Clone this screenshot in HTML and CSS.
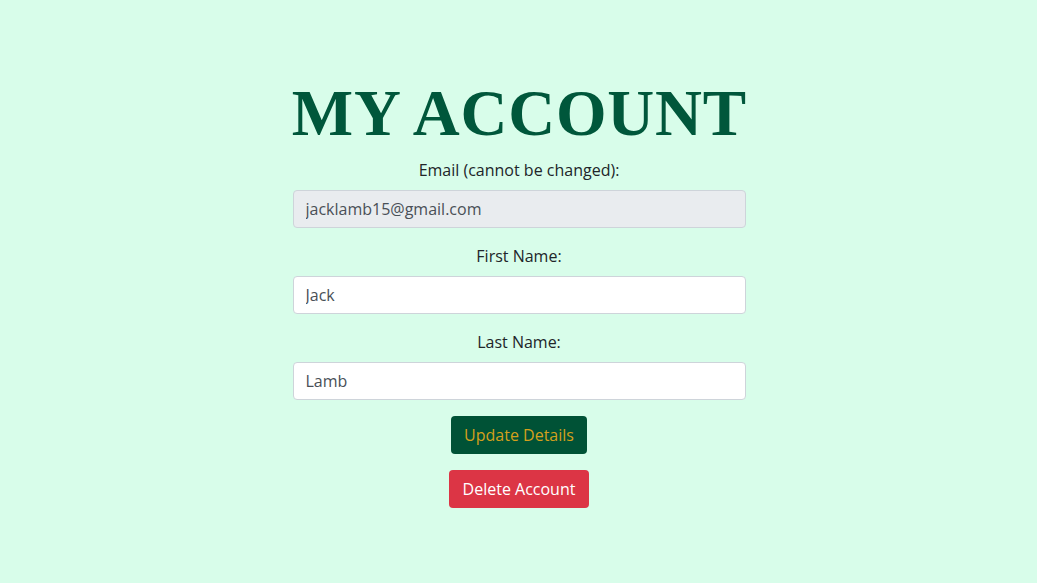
FILE: index.html
```html
<!DOCTYPE html>
<html lang="en">
<head>
<meta charset="utf-8">
<title>My Account</title>
<link rel="stylesheet" href="styles.css">
</head>
<body>
<main class="page">
  <form class="account">
    <h1 class="title">MY ACCOUNT</h1>
    <label class="label" for="email">Email (cannot be changed):</label>
    <input class="field" id="email" type="email" value="jacklamb15@gmail.com" disabled>
    <label class="label" for="first">First Name:</label>
    <input class="field" id="first" type="text" value="Jack">
    <label class="label" for="last">Last Name:</label>
    <input class="field" id="last" type="text" value="Lamb">
    <button class="btn btn-update" type="button">Update Details</button>
    <button class="btn btn-delete" type="button">Delete Account</button>
  </form>
</main>
</body>
</html>
```
FILE: styles.css
```css
* { box-sizing: border-box; }
html, body { margin: 0; padding: 0; }
body {
  background: #d8fdea;
  font-family: "Open Sans", "Noto Sans", sans-serif;
  font-size: 16px;
  line-height: 1.5;
  color: #212529;
  width: 1037px;
  height: 583px;
  overflow: hidden;
}
.page {
  display: flex;
  justify-content: center;
  padding-top: 74px;
}
.account {
  width: 453px;
  margin-left: 1px;
  display: flex;
  flex-direction: column;
  align-items: center;
}
.title {
  margin: 0 0 6px;
  font-family: "Liberation Serif", "Times New Roman", serif;
  font-weight: 700;
  font-size: 65px;
  line-height: 78px;
  letter-spacing: 0.8px;
  text-indent: 0.8px;
  color: #00573b;
  white-space: nowrap;
}
.label {
  display: block;
  margin-bottom: 8px;
  text-align: center;
}
.field {
  display: block;
  width: 100%;
  height: 38px;
  padding: 6px 12px;
  font-family: inherit;
  font-size: 16px;
  line-height: 1.5;
  color: #495057;
  background: #fff;
  border: 1px solid #ced4da;
  border-radius: 4px;
  margin-bottom: 16px;
}
.field:disabled {
  background: #e9ecef;
  color: #495057;
  opacity: 1;
}
.btn {
  display: block;
  height: 38px;
  padding: 6px 12px;
  font-family: inherit;
  font-size: 16px;
  line-height: 1.5;
  border: 1px solid transparent;
  border-radius: 4px;
  cursor: pointer;
}
.btn-update {
  background: #005236;
  color: #d4a01c;
  margin-bottom: 16px;
}
.btn-delete {
  background: #dc3545;
  color: #fff;
  padding: 6px 12.5px;
}
```
